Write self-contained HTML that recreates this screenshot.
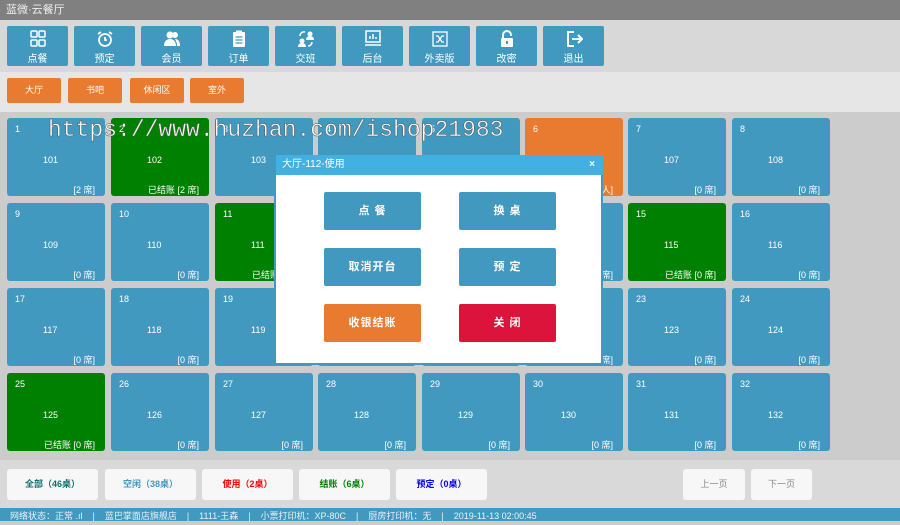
<!DOCTYPE html>
<html><head><meta charset="utf-8"><style>
*{margin:0;padding:0;box-sizing:border-box}
body{width:900px;height:521px;overflow:hidden;position:relative;background:#ccc;font-family:"Liberation Sans","Noto Sans CJK SC",sans-serif;color:#fff}
.a{position:absolute}
#title{left:0;top:0;width:900px;height:20px;background:#808080;font-size:11px;line-height:20px;padding-left:6px;color:#eee}
#tb{left:0;top:20px;width:900px;height:52px;background:#d8d8d8}
.tbb{position:absolute;top:6px;width:61px;height:40px;background:#4299bf;border-radius:2px;font-size:10px;text-align:center}
.tbb svg{display:block;margin:4px auto 2px}
#tabs{left:0;top:72px;width:900px;height:40px;background:#e6e6e6}
.tab{position:absolute;top:6px;width:54px;height:25px;background:#e87b30;border-radius:2px;font-size:9px;text-align:center;line-height:25px}
.t{position:absolute;width:98px;height:78px;background:#4299bf;border-radius:3px;font-size:9px}
.t .n{position:absolute;left:8px;top:6px}
.t .c{position:absolute;left:36px;top:37px}
.t .b{position:absolute;right:10px;top:65px}
.g{background:#008000}.o{background:#e87b30}
#bot{left:0;top:460px;width:900px;height:48px;background:#d9d9d9}
.bb{position:absolute;top:9px;width:91px;height:31px;background:#f7f7f7;border-radius:3px;font-size:9px;text-align:center;line-height:31px;font-weight:bold}
#st{left:0;top:508px;width:900px;height:13px;background:#4299bf;font-size:9px;line-height:17px;padding-left:10px;white-space:pre;color:#e8f2f8}
#wm{left:48px;top:117px;font-family:"Liberation Mono",monospace;font-size:23px;color:#fff;-webkit-text-stroke:0.5px #555}
#md{left:274px;top:155px;width:329px;height:210px;background:#fff;border:2px solid #4299bf;border-top:none}
#mh{left:0;top:0;width:327px;height:20px;background:#42b0e0;font-size:10px;line-height:20px;padding-left:6px}
.mb{position:absolute;width:97px;height:38px;background:#4299bf;border-radius:2px;font-size:11px;font-weight:bold;text-align:center;line-height:38px;letter-spacing:1px}
</style></head><body>
<div id="title" class="a">蓝微·云餐厅</div>
<div id="tb" class="a">
<div class="tbb" style="left:7px"><svg width="16" height="18" viewBox="0 0 16 18" fill="none" stroke="#fff" stroke-width="1.5"><rect x="1" y="1" width="6" height="6" rx="1"/><rect x="9" y="1" width="6" height="6" rx="1"/><rect x="1" y="10" width="6" height="6" rx="1"/><rect x="9" y="10" width="6" height="6" rx="1"/></svg>点餐</div>
<div class="tbb" style="left:74px"><svg width="18" height="18" viewBox="0 0 18 18" fill="none" stroke="#fff" stroke-width="1.8"><circle cx="9" cy="10" r="6"/><path d="M9 7v3h2M2 4l3-2M16 4l-3-2"/></svg>预定</div>
<div class="tbb" style="left:141px"><svg width="18" height="18" viewBox="0 0 18 18" fill="#fff"><circle cx="7" cy="5" r="3.5"/><circle cx="12" cy="5" r="3"/><path d="M1 16c0-5 3-7 6-7s6 2 6 7zM12 9c3 0 5 2 5 7h-3c0-3-1-5-2-7z"/></svg>会员</div>
<div class="tbb" style="left:208px"><svg width="16" height="18" viewBox="0 0 16 18" fill="#fff"><rect x="2" y="2" width="12" height="15" rx="1"/><rect x="5" y="0.5" width="6" height="3" fill="#fff"/><path d="M4.5 7h7M4.5 10h7M4.5 13h7" stroke="#4299bf" stroke-width="1.2"/></svg>订单</div>
<div class="tbb" style="left:275px"><svg width="18" height="18" viewBox="0 0 18 18" fill="#fff"><circle cx="5" cy="11" r="2.5"/><path d="M1 17c0-3 2-4 4-4s4 1 4 4z"/><circle cx="13" cy="4" r="2.5"/><path d="M9 10c0-3 2-4 4-4s4 1 4 4z"/><path d="M3 6a4 4 0 0 1 5-4M15 12a4 4 0 0 1-4 4" stroke="#fff" fill="none" stroke-width="1.5"/></svg>交班</div>
<div class="tbb" style="left:342px"><svg width="18" height="18" viewBox="0 0 18 18" fill="none" stroke="#fff" stroke-width="1.5"><rect x="2" y="1" width="14" height="11"/><path d="M6 9V6M9 9V4M12 9V7M1 15h16"/></svg>后台</div>
<div class="tbb" style="left:409px"><svg width="18" height="18" viewBox="0 0 18 18" fill="none" stroke="#fff" stroke-width="1.3"><rect x="2" y="2" width="14" height="14"/><path d="M5 6h2l4 6h2M5 12h2l4-6h2"/></svg>外卖版</div>
<div class="tbb" style="left:476px"><svg width="16" height="18" viewBox="0 0 16 18" fill="#fff"><path d="M4 8V5a4 4 0 0 1 8 0v1" stroke="#fff" stroke-width="2" fill="none"/><rect x="2" y="8" width="12" height="9" rx="1"/><rect x="7" y="11" width="2" height="3" fill="#4299bf"/></svg>改密</div>
<div class="tbb" style="left:543px"><svg width="18" height="18" viewBox="0 0 18 18" fill="none" stroke="#fff" stroke-width="2"><path d="M9 2H3v14h6M7 9h9M13 5l4 4-4 4"/></svg>退出</div>
</div>
<div id="tabs" class="a">
<div class="tab" style="left:7px">大厅</div><div class="tab" style="left:68px">书吧</div><div class="tab" style="left:130px">休闲区</div><div class="tab" style="left:190px">室外</div>
</div>

<div class="t" style="left:7px;top:118px"><span class="n">1</span><span class="c">101</span><span class="b">[2 席]</span></div>
<div class="t g" style="left:111px;top:118px"><span class="n">2</span><span class="c">102</span><span class="b">已结账 [2 席]</span></div>
<div class="t" style="left:215px;top:118px"><span class="n">3</span><span class="c">103</span><span class="b">[2 席]</span></div>
<div class="t" style="left:318px;top:118px"><span class="n">4</span><span class="c">104</span><span class="b">[0 席]</span></div>
<div class="t" style="left:422px;top:118px"><span class="n">5</span><span class="c">105</span><span class="b">[0 席]</span></div>
<div class="t o" style="left:525px;top:118px"><span class="n">6</span><span class="c">106</span><span class="b">[0 人]</span></div>
<div class="t" style="left:628px;top:118px"><span class="n">7</span><span class="c">107</span><span class="b">[0 席]</span></div>
<div class="t" style="left:732px;top:118px"><span class="n">8</span><span class="c">108</span><span class="b">[0 席]</span></div>

<div class="t" style="left:7px;top:203px"><span class="n">9</span><span class="c">109</span><span class="b">[0 席]</span></div>
<div class="t" style="left:111px;top:203px"><span class="n">10</span><span class="c">110</span><span class="b">[0 席]</span></div>
<div class="t g" style="left:215px;top:203px"><span class="n">11</span><span class="c">111</span><span class="b">已结账 [0 席]</span></div>
<div class="t" style="left:318px;top:203px"><span class="n">12</span><span class="c">112</span><span class="b">[0 席]</span></div>
<div class="t" style="left:422px;top:203px"><span class="n">13</span><span class="c">113</span><span class="b">[0 席]</span></div>
<div class="t" style="left:525px;top:203px"><span class="n">14</span><span class="c">114</span><span class="b">[0 席]</span></div>
<div class="t g" style="left:628px;top:203px"><span class="n">15</span><span class="c">115</span><span class="b">已结账 [0 席]</span></div>
<div class="t" style="left:732px;top:203px"><span class="n">16</span><span class="c">116</span><span class="b">[0 席]</span></div>

<div class="t" style="left:7px;top:288px"><span class="n">17</span><span class="c">117</span><span class="b">[0 席]</span></div>
<div class="t" style="left:111px;top:288px"><span class="n">18</span><span class="c">118</span><span class="b">[0 席]</span></div>
<div class="t" style="left:215px;top:288px"><span class="n">19</span><span class="c">119</span><span class="b">[0 席]</span></div>
<div class="t" style="left:318px;top:288px"><span class="n">20</span><span class="c">120</span><span class="b">[0 席]</span></div>
<div class="t" style="left:422px;top:288px"><span class="n">21</span><span class="c">121</span><span class="b">[0 席]</span></div>
<div class="t" style="left:525px;top:288px"><span class="n">22</span><span class="c">122</span><span class="b">[0 席]</span></div>
<div class="t" style="left:628px;top:288px"><span class="n">23</span><span class="c">123</span><span class="b">[0 席]</span></div>
<div class="t" style="left:732px;top:288px"><span class="n">24</span><span class="c">124</span><span class="b">[0 席]</span></div>

<div class="t g" style="left:7px;top:373px"><span class="n">25</span><span class="c">125</span><span class="b">已结账 [0 席]</span></div>
<div class="t" style="left:111px;top:373px"><span class="n">26</span><span class="c">126</span><span class="b">[0 席]</span></div>
<div class="t" style="left:215px;top:373px"><span class="n">27</span><span class="c">127</span><span class="b">[0 席]</span></div>
<div class="t" style="left:318px;top:373px"><span class="n">28</span><span class="c">128</span><span class="b">[0 席]</span></div>
<div class="t" style="left:422px;top:373px"><span class="n">29</span><span class="c">129</span><span class="b">[0 席]</span></div>
<div class="t" style="left:525px;top:373px"><span class="n">30</span><span class="c">130</span><span class="b">[0 席]</span></div>
<div class="t" style="left:628px;top:373px"><span class="n">31</span><span class="c">131</span><span class="b">[0 席]</span></div>
<div class="t" style="left:732px;top:373px"><span class="n">32</span><span class="c">132</span><span class="b">[0 席]</span></div>

<div id="wm" class="a">https://www.huzhan.com/ishop21983</div>

<div id="md" class="a">
<div id="mh" class="a">大厅-112-使用<span style="position:absolute;right:8px;font-weight:bold">×</span></div>
<div class="mb" style="left:48px;top:37px">点 餐</div>
<div class="mb" style="left:183px;top:37px">换 桌</div>
<div class="mb" style="left:48px;top:93px">取消开台</div>
<div class="mb" style="left:183px;top:93px">预 定</div>
<div class="mb" style="left:48px;top:149px;background:#e87b30">收银结账</div>
<div class="mb" style="left:183px;top:149px;background:#dc143c">关 闭</div>
</div>

<div id="bot" class="a">
<div class="bb" style="left:7px;color:#0f6e6e">全部（46桌）</div>
<div class="bb" style="left:105px;color:#4299bf">空闲（38桌）</div>
<div class="bb" style="left:202px;color:#f00">使用（2桌）</div>
<div class="bb" style="left:299px;color:#008000">结账（6桌）</div>
<div class="bb" style="left:396px;color:#00f">预定（0桌）</div>
<div class="bb" style="left:683px;width:62px;color:#888;font-weight:normal">上一页</div>
<div class="bb" style="left:751px;width:61px;color:#888;font-weight:normal">下一页</div>
</div>
<div id="st" class="a">网络状态：正常 .ıl    |    蓝巴掌面店旗舰店    |    1111-王森    |    小票打印机：XP-80C    |    厨房打印机：无    |    2019-11-13 02:00:45</div>
</body></html>
